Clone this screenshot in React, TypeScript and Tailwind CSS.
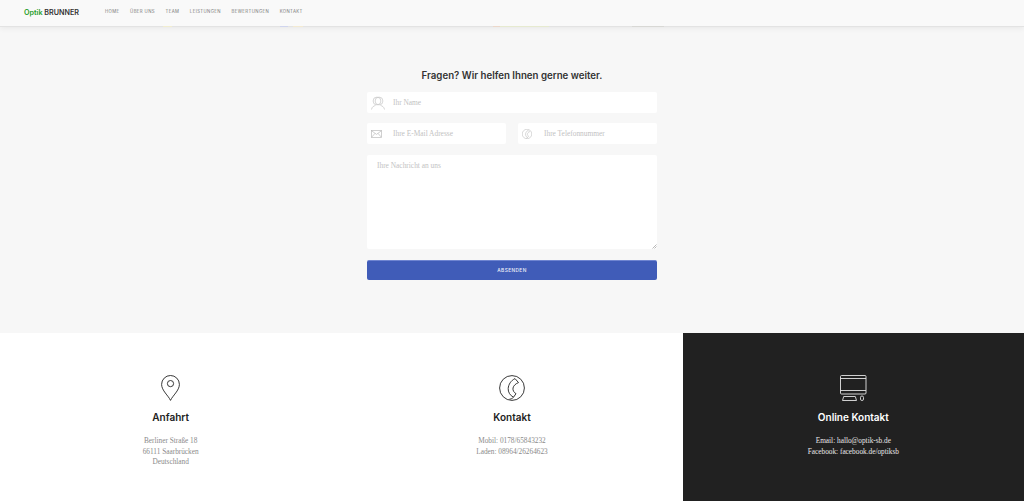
import type { ReactNode } from "react";

const navItems = ["HOME", "ÜBER UNS", "TEAM", "LEISTUNGEN", "BEWERTUNGEN", "KONTAKT"];

// bits of the hero picture that show under the header bar
const stripSegments = [
  { width: "w-[163px]", color: "bg-transparent" },
  { width: "w-[9px]", color: "bg-[#f1edd0]" },
  { width: "w-[108px]", color: "bg-transparent" },
  { width: "w-[8px]", color: "bg-[#d0d5ee]" },
  { width: "w-[5px]", color: "bg-transparent" },
  { width: "w-[10px]", color: "bg-[#f3ead2]" },
  { width: "w-[190px]", color: "bg-transparent" },
  { width: "w-[7px]", color: "bg-[#ecd8ca]" },
  { width: "w-[49px]", color: "bg-[#e6ead0]" },
  { width: "w-[83px]", color: "bg-transparent" },
  { width: "w-[32px]", color: "bg-[#d8d8d5]" }
];

function UserIcon() {
  return (
    <svg width="14" height="14" viewBox="0 0 14 14" fill="none" stroke="#c4c4c4" strokeWidth="0.7">
      <circle cx="6" cy="5" r="3.9" />
      <circle cx="8" cy="5" r="3.9" />
      <path d="M0.5 13.5c.4-2.6 2.2-3.6 4-4M13.5 13.5c-.4-2.6-2.2-3.6-4-4" />
    </svg>
  );
}

function MailIcon() {
  return (
    <svg width="11" height="8" viewBox="0 0 11 8" fill="none" stroke="#bdbdbd" strokeWidth="0.7">
      <rect x="0.4" y="0.4" width="10.2" height="7.2" />
      <path d="M0.5 0.7 5.5 4.4l5-3.7M0.5 7.3l3.6-4M10.5 7.3l-3.6-4" />
    </svg>
  );
}

function PhoneIcon({ size, color, width }: { size: number; color: string; width: number }) {
  return (
    <svg
      width={size}
      height={size}
      viewBox="0 0 26 26"
      fill="none"
      stroke={color}
      strokeWidth={width}
      strokeLinejoin="round"
    >
      <circle cx="13" cy="13" r="12.4" />
      <path d="M16 3.6 19.5 7.6C17 8.5 14.5 10.5 14 13 13.6 15.5 15 17.5 17 18.7L14.5 22.2C11 20.5 9 17 9.2 13.5 9.4 9.5 12 5.5 16 3.6z" />
      <path d="M14.5 22.2c-1 1.2-2.5 1.8-4 1.9" />
    </svg>
  );
}

function PinIcon() {
  return (
    <svg width="19" height="26" viewBox="0 0 19 26" fill="none" stroke="#222" strokeWidth="0.9">
      <path d="M9.5 25.4C7.5 20.8.6 15.5.6 9.4a8.9 8.9 0 0 1 17.8 0c0 6.1-6.9 11.4-8.9 16z" />
      <circle cx="9.5" cy="8.6" r="3.1" />
    </svg>
  );
}

function MonitorIcon() {
  return (
    <svg width="27" height="26" viewBox="0 0 27 26" fill="none" stroke="#e4e4e4" strokeWidth="0.9">
      <rect x="0.5" y="0.5" width="25.5" height="18.5" rx="1" />
      <path d="M0.5 3.5h25.5M0.5 15.5h25.5" />
      <path d="M2.5 25.5l1.2-4h11.6l1.2 4z" />
      <rect x="20.5" y="21" width="3" height="4.5" rx="1.4" />
    </svg>
  );
}

function InfoColumn({
  icon,
  title,
  lines,
  dark
}: {
  icon: ReactNode;
  title: string;
  lines: string[];
  dark?: boolean;
}) {
  return (
    <div className={`flex flex-col items-center pt-[42px] ${dark ? "bg-[#212121]" : "bg-white"}`}>
      <div className="flex h-[26px] items-center">{icon}</div>
      <h3
        className={`mt-[8px] font-['Inter',sans-serif] text-[10px] leading-[16px] font-semibold ${
          dark ? "text-white" : "text-[#222]"
        }`}
      >
        {title}
      </h3>
      <div
        className={`mt-[11px] text-center font-['Liberation_Serif',serif] text-[7.3px] leading-[10.5px] ${
          dark ? "text-[#e8e8e8]" : "text-[#8a8a8a]"
        }`}
      >
        {lines.map((line) => (
          <p key={line}>{line}</p>
        ))}
      </div>
    </div>
  );
}

const placeholderText =
  "font-['Liberation_Serif',serif] text-[7.4px] text-[#c2c2c2]";

export default function App() {
  return (
    <div className="flex h-[501px] w-[1024px] flex-col overflow-hidden bg-[#f7f7f7]">
      <header className="relative z-10 flex h-[27px] shrink-0 items-center border-b border-[#e3e3e3] bg-[#f9f9f9] pl-6 shadow-[0_1px_6px_rgba(0,0,0,0.07)]">
        <div className="w-[81px] font-['Inter',sans-serif] text-[7.2px] font-semibold text-[#333]">
          <span className="text-[#1f9d2a]">Optik</span> BRUNNER
        </div>
        <nav className="-mt-[2px] flex gap-[10.5px] font-['Inter',sans-serif] text-[4.3px] tracking-[0.4px] text-[#777]">
          {navItems.map((item) => (
            <span key={item}>{item}</span>
          ))}
        </nav>
        <div className="absolute -bottom-px left-0 flex h-px">
          {stripSegments.map((segment, index) => (
            <span key={index} className={`${segment.width} ${segment.color}`} />
          ))}
        </div>
      </header>

      <main className="flex h-[306px] shrink-0 flex-col items-center pt-[42px]">
        <h2 className="h-[14px] font-['Inter',sans-serif] text-[9.7px] leading-[14px] font-semibold text-[#333]">
          Fragen? Wir helfen Ihnen gerne weiter.
        </h2>
        <form className="mt-[9px] flex w-[290px] flex-col">
          <div className="flex h-[21px] items-center rounded-[2px] bg-white pl-[4px]">
            <UserIcon />
            <span className={`ml-[8px] ${placeholderText}`}>Ihr Name</span>
          </div>
          <div className="mt-[10px] flex gap-3">
            <div className="flex h-[21px] flex-1 items-center rounded-[2px] bg-white pl-[4px]">
              <MailIcon />
              <span className={`ml-[11px] ${placeholderText}`}>Ihre E-Mail Adresse</span>
            </div>
            <div className="flex h-[21px] flex-1 items-center rounded-[2px] bg-white pl-[4px]">
              <PhoneIcon size={10} color="#bdbdbd" width={1.5} />
              <span className={`ml-[12px] ${placeholderText}`}>Ihre Telefonnummer</span>
            </div>
          </div>
          <div className="relative mt-[11px] h-[94px] rounded-[2px] bg-white pt-[6px] pl-[10px]">
            <span className={`block leading-[10px] ${placeholderText}`}>Ihre Nachricht an uns</span>
            <svg
              className="absolute right-0 bottom-0"
              width="5"
              height="5"
              viewBox="0 0 5 5"
              stroke="#8a8a8a"
              strokeWidth="0.6"
            >
              <path d="M0.5 4.5 4.5 0.5M2.5 4.5l2-2" />
            </svg>
          </div>
          <button
            type="button"
            className="mt-[11px] h-[20px] rounded-[2px] border-t border-[#6f85d1] bg-[#405cb8] font-['Inter',sans-serif] text-[4.8px] font-medium tracking-[0.4px] text-[#eef0f8]"
          >
            ABSENDEN
          </button>
        </form>
      </main>

      <footer className="grid flex-1 grid-cols-3">
        <InfoColumn
          icon={<PinIcon />}
          title="Anfahrt"
          lines={["Berliner Straße 18", "66111 Saarbrücken", "Deutschland"]}
        />
        <InfoColumn
          icon={<PhoneIcon size={26} color="#222" width={0.9} />}
          title="Kontakt"
          lines={["Mobil: 0178/65843232", "Laden: 08964/26264623"]}
        />
        <InfoColumn
          dark
          icon={<MonitorIcon />}
          title="Online Kontakt"
          lines={["Email: hallo@optik-sb.de", "Facebook: facebook.de/optiksb"]}
        />
      </footer>
    </div>
  );
}
